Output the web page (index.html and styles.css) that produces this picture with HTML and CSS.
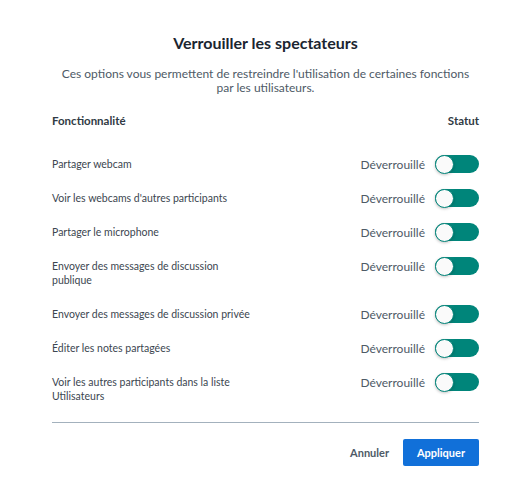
FILE: index.html
```html
<!DOCTYPE html>
<html lang="fr">
<head>
<meta charset="utf-8">
<link rel="stylesheet" href="styles.css">
</head>
<body>
<div class="modal">
  <h2 class="title">Verrouiller les spectateurs</h2>
  <p class="desc">Ces options vous permettent de restreindre l'utilisation de certaines fonctions par les utilisateurs.</p>
  <div class="head">
    <span>Fonctionnalité</span>
    <span>Statut</span>
  </div>
  <div class="rows">
    <div class="row"><span class="label">Partager webcam</span><span class="status">Déverrouillé<span class="toggle"><span class="knob"></span></span></span></div>
    <div class="row"><span class="label">Voir les webcams d'autres participants</span><span class="status">Déverrouillé<span class="toggle"><span class="knob"></span></span></span></div>
    <div class="row"><span class="label">Partager le microphone</span><span class="status">Déverrouillé<span class="toggle"><span class="knob"></span></span></span></div>
    <div class="row"><span class="label">Envoyer des messages de discussion publique</span><span class="status">Déverrouillé<span class="toggle"><span class="knob"></span></span></span></div>
    <div class="row"><span class="label">Envoyer des messages de discussion privée</span><span class="status">Déverrouillé<span class="toggle"><span class="knob"></span></span></span></div>
    <div class="row"><span class="label">Éditer les notes partagées</span><span class="status">Déverrouillé<span class="toggle"><span class="knob"></span></span></span></div>
    <div class="row"><span class="label">Voir les autres participants dans la liste Utilisateurs</span><span class="status">Déverrouillé<span class="toggle"><span class="knob"></span></span></span></div>
  </div>
  <div class="footer">
    <button class="btn-cancel">Annuler</button>
    <button class="btn-apply">Appliquer</button>
  </div>
</div>
</body>
</html>
```
FILE: styles.css
```css
html, body {
  margin: 0;
  background: #fff;
}
body {
  font-family: Lato, "Noto Sans", sans-serif;
  color: #4e5a66;
}
.modal {
  width: 427px;
  margin-left: 52px;
  padding-top: 33px;
}
.title {
  margin: 0;
  text-align: center;
  font-size: 16px;
  font-weight: 700;
  color: #1b2530;
  line-height: 20px;
}
.desc {
  margin: 14px 0 0;
  text-align: center;
  font-size: 12px;
  line-height: 14px;
  color: #4e5a66;
}
.head {
  display: flex;
  justify-content: space-between;
  margin-top: 19px;
  font-size: 11.5px;
  font-weight: 700;
  color: #303a44;
  line-height: 14px;
}
.rows {
  margin-top: 27px;
  display: flex;
  flex-direction: column;
  gap: 16px;
}
.row {
  display: flex;
  justify-content: space-between;
  align-items: flex-start;
}
.label {
  font-size: 10.5px;
  line-height: 14px;
  color: #3c4650;
  width: 200px;
  padding: 2px 0;
}
.status {
  display: flex;
  align-items: center;
  gap: 10px;
  font-size: 12px;
  color: #4e5a66;
}
.toggle {
  position: relative;
  width: 44px;
  height: 18px;
  border-radius: 9px;
  background: linear-gradient(90deg, #2a9a90 0%, #00857a 45%, #00857a 100%);
}
.knob {
  position: absolute;
  left: 0;
  top: -0.5px;
  width: 17px;
  height: 17px;
  border-radius: 50%;
  background: #fafafa;
  border: 1px solid #00857a;
  box-shadow: 0 1px 3px rgba(0,0,0,0.25);
  box-sizing: content-box;
}
.footer {
  margin-top: 17px;
  border-top: 1px solid #a3b1bd;
  padding-top: 16px;
  display: flex;
  justify-content: flex-end;
  align-items: center;
  gap: 14px;
}
button {
  font-family: inherit;
  font-weight: 700;
  font-size: 11px;
  border: none;
  cursor: pointer;
}
.btn-cancel {
  background: none;
  color: #4e5a66;
  padding: 0;
}
.btn-apply {
  background: #1170d9;
  color: #fff;
  width: 76px;
  height: 27px;
  border-radius: 2px;
}
```
